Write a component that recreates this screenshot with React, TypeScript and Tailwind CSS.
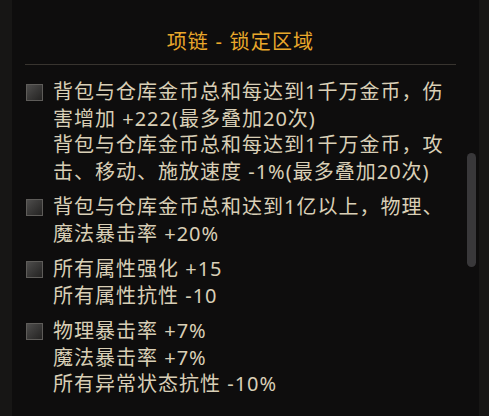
import React from 'react';

interface Affix {
    id: number;
    lines: string[];
}

const affixes: Affix[] = [
    {
        id: 1,
        lines: [
            '背包与仓库金币总和每达到1千万金币，伤害增加 +222(最多叠加20次)',
            '背包与仓库金币总和每达到1千万金币，攻击、移动、施放速度 -1%(最多叠加20次)',
        ],
    },
    { id: 2, lines: ['背包与仓库金币总和达到1亿以上，物理、魔法暴击率 +20%'] },
    { id: 3, lines: ['所有属性强化 +15', '所有属性抗性 -10'] },
    { id: 4, lines: ['物理暴击率 +7%', '魔法暴击率 +7%', '所有异常状态抗性 -10%'] },
];

export default function App() {
    return (
        <div
            className="w-full h-[416px] bg-[#171615] flex overflow-hidden"
            style={{ fontFamily: '"Noto Sans", "Noto Sans CJK SC", sans-serif' }}
        >
            {/* Panel */}
            <div className="relative ml-[12px] w-[467px] h-full bg-[#0e0d0d] pl-[13px] pr-[23px]">
                {/* Title */}
                <div className="pt-[28px] h-[56px] text-center text-[20px] leading-[28px] tracking-[1.2px] text-[#e9a82b]">
                    项链 - 锁定区域
                </div>
                <div className="mt-[8px] h-px bg-[#38342f]" />

                {/* Affix list */}
                <ul className="mt-[14px] flex flex-col gap-[9px]">
                    {affixes.map((affix) => (
                        <li key={affix.id} className="flex items-start gap-[10px]">
                            <div className="ml-[1px] mt-[5px] w-[17px] h-[17px] flex-shrink-0 border border-[#5e5c59] bg-gradient-to-br from-[#4e4d4c] to-[#242322]" />
                            <div className="flex-1 min-w-0 text-[20px] leading-[26.5px] tracking-[1px] text-[#d9cfb6]">
                                {affix.lines.map((line, i) => (
                                    <p key={i}>{line}</p>
                                ))}
                            </div>
                        </li>
                    ))}
                </ul>

                {/* Scrollbar thumb */}
                <div className="absolute right-[3px] top-[153px] w-[9px] h-[114px] rounded-full bg-[#39383a]" />
            </div>
        </div>
    );
}
